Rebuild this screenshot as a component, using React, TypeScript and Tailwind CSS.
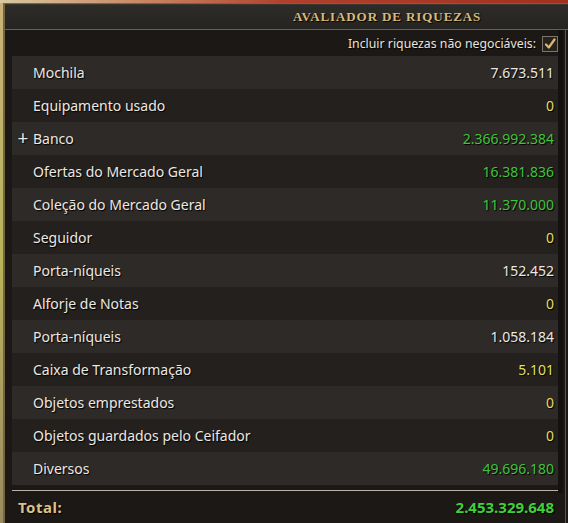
import React from "react";

const rows: { label: string; value: string; color: string; plus?: boolean }[] = [
  { label: "Mochila", value: "7.673.511", color: "text-[#ece8e2]" },
  { label: "Equipamento usado", value: "0", color: "text-[#e6df5c]" },
  { label: "Banco", value: "2.366.992.384", color: "text-[#3fc43a]", plus: true },
  { label: "Ofertas do Mercado Geral", value: "16.381.836", color: "text-[#3fc43a]" },
  { label: "Coleção do Mercado Geral", value: "11.370.000", color: "text-[#3fc43a]" },
  { label: "Seguidor", value: "0", color: "text-[#e6df5c]" },
  { label: "Porta-níqueis", value: "152.452", color: "text-[#ece8e2]" },
  { label: "Alforje de Notas", value: "0", color: "text-[#e6df5c]" },
  { label: "Porta-níqueis", value: "1.058.184", color: "text-[#ece8e2]" },
  { label: "Caixa de Transformação", value: "5.101", color: "text-[#e6df5c]" },
  { label: "Objetos emprestados", value: "0", color: "text-[#e6df5c]" },
  { label: "Objetos guardados pelo Ceifador", value: "0", color: "text-[#e6df5c]" },
  { label: "Diversos", value: "49.696.180", color: "text-[#3fc43a]" },
];

export default function App() {
  return (
    <div
      className="w-[568px] h-[523px] overflow-hidden bg-gradient-to-b from-[#c9b27a] via-[#b7b45a] to-[#9a8a62] flex flex-col"
      style={{ fontFamily: '"Noto Sans", "Open Sans", sans-serif' }}
    >
      <div className="h-[3px] bg-gradient-to-r from-[#d8c9a0] via-[#b0402c] to-[#a2301f]" />
      <div className="flex-1 ml-[3px] border-l-2 border-t border-[#75663f] bg-[#1b1815] flex flex-col">
        <div className="h-[26px] bg-gradient-to-b from-[#2e2c28] to-[#262420] border-t border-[#3a3630] border-b border-b-[#6f6240] flex items-center pl-[288px]">
          <span
            className="text-[13px] font-bold tracking-[0.9px] text-[#d9b97a] [text-shadow:1px_1px_1px_#000]"
            style={{ fontFamily: '"Liberation Serif", "DejaVu Serif", serif' }}
          >
            AVALIADOR DE RIQUEZAS
          </span>
        </div>
        <div className="flex-1 flex">
          <div className="flex-1 flex flex-col pl-[7px]">
            <div className="h-[26px] flex items-center justify-end gap-[6px] pt-[2px]">
              <span className="text-[12.3px] text-[#e8e4de] [text-shadow:1px_1px_1px_#000]">
                Incluir riquezas não negociáveis:
              </span>
              <div className="w-[16px] h-[16px] border border-[#7c7568] bg-[#26221e] flex items-center justify-center">
                <svg width="12" height="12" viewBox="0 0 12 12">
                  <path d="M2 6.5 L4.8 9.5 L10.5 1.5" fill="none" stroke="#dcb874" strokeWidth="2.2" strokeLinecap="round" strokeLinejoin="round" />
                </svg>
              </div>
            </div>
            <div className="flex flex-col">
              {rows.map((r, i) => (
                <div
                  key={i}
                  className={`h-[33px] flex items-center pr-[4px] text-[14px] [text-shadow:1px_1px_1px_#000] ${
                    i % 2 === 0 ? "bg-[#2e2a27]" : "bg-[#23201d]"
                  }`}
                >
                  <span className="w-[21px] flex justify-center pl-[1px] text-[#ece8e2] text-[19px] leading-none">
                    {r.plus ? "+" : ""}
                  </span>
                  <span className="text-[#ece8e2]">{r.label}</span>
                  <span className={`ml-auto ${r.color}`}>{r.value}</span>
                </div>
              ))}
            </div>
            <div className="h-[5px]" />
            <div className="h-px bg-[#bab2a4]" />
            <div className="flex-1 flex items-center pl-[6px] pr-[4px] text-[15px] font-bold [text-shadow:1px_1px_1px_#000]">
              <span className="text-[#dcc08a] tracking-[0.5px]">Total:</span>
              <span className="ml-auto text-[#3fd13a]">2.453.329.648</span>
            </div>
          </div>
          <div className="w-[10px] flex">
            <div className="w-[5px] bg-[#141210] mb-[30px]" />
            <div className="w-[2px]" />
            <div className="w-px bg-[#5a5550]" />
          </div>
        </div>
      </div>
    </div>
  );
}
